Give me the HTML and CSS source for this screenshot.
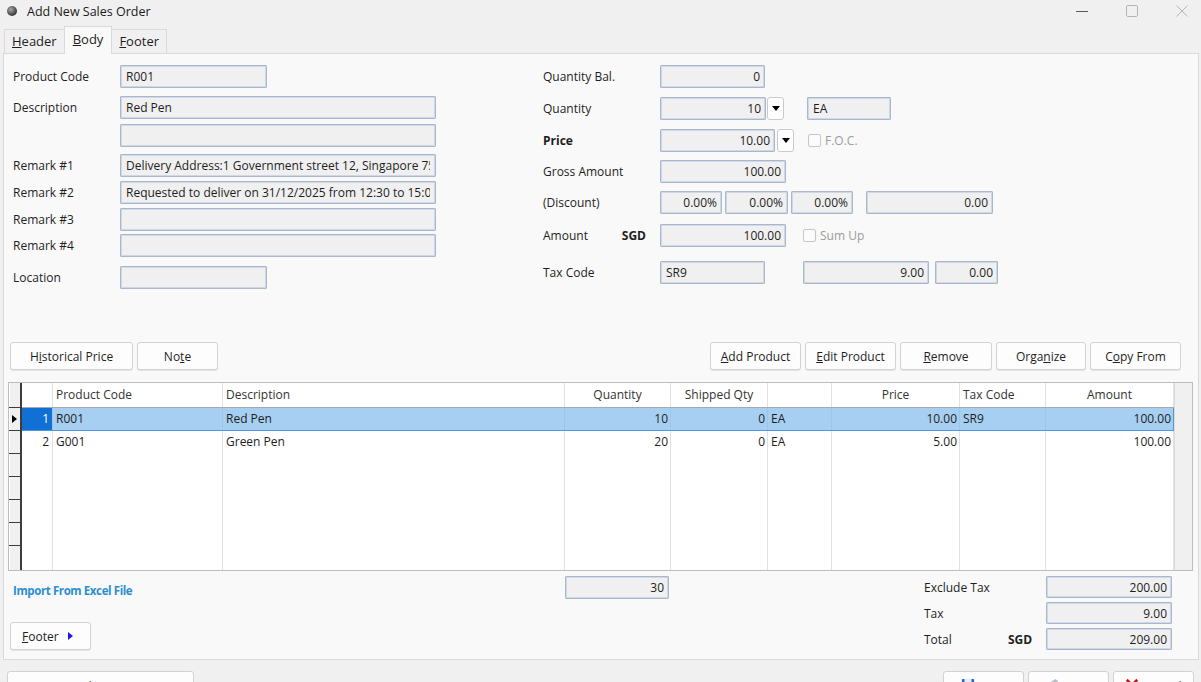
FILE: index.html
```html
<!DOCTYPE html>
<html>
<head>
	<meta http-equiv="Content-Type" content="text/html; charset=utf-8" />
	<title>Add New Sales Order</title>
	<link rel="stylesheet" href="styles.css">
</head>
<body>
<div class="titlebar">
	<span class="app_dot"></span>
	<span class="title">Add New Sales Order</span>
	<div class="win_buttons">
		<svg viewBox="0 0 12 12"><line x1="0" y1="6.5" x2="12" y2="6.5" stroke="#5a5a5a" stroke-width="1"/></svg>
		<svg viewBox="0 0 12 12"><rect x="0.5" y="0.5" width="11" height="11" rx="1.5" fill="none" stroke="#b4b4b4" stroke-width="1"/></svg>
		<svg viewBox="0 0 12 12"><path d="M0.5 0.5 L11.5 11.5 M11.5 0.5 L0.5 11.5" stroke="#b4b4b4" stroke-width="1"/></svg>
	</div>
</div>
<div class="tabs">
	<div class="tab"><u>H</u>eader</div>
	<div class="tab active"><u>B</u>ody</div>
	<div class="tab"><u>F</u>ooter</div>
</div>
<div class="panel">
	<div class="entry">
		<div class="col_left">
			<label>Product Code</label>
			<input class="box w147" type="text" value="R001" readonly>
			<label>Description</label>
			<input class="box w316" type="text" value="Red Pen" readonly>
			<label></label>
			<input class="box w316" type="text" value="" readonly>
			<label>Remark #1</label>
			<input class="box w316" type="text" value="Delivery Address:1 Government street 12, Singapore 758888" readonly>
			<label>Remark #2</label>
			<input class="box w316" type="text" value="Requested to deliver on 31/12/2025 from 12:30 to 15:00" readonly>
			<label>Remark #3</label>
			<input class="box w316" type="text" value="" readonly>
			<label>Remark #4</label>
			<input class="box w316" type="text" value="" readonly>
			<label>Location</label>
			<input class="box w147" type="text" value="" readonly>
		</div>
		<div class="col_right">
			<label>Quantity Bal.</label>
			<div class="field">
				<input class="box num w105" type="text" value="0" readonly>
			</div>
			<label>Quantity</label>
			<div class="field">
				<input class="box num w106" type="text" value="10" readonly>
				<span class="drop ml1"></span>
				<input class="box w84 ml23" type="text" value="EA" readonly>
			</div>
			<label><b>Price</b></label>
			<div class="field">
				<input class="box num w115" type="text" value="10.00" readonly>
				<span class="drop ml2"></span>
				<span class="check ml14"></span><span class="check_text">F.O.C.</span>
			</div>
			<label>Gross Amount</label>
			<div class="field">
				<input class="box num w126" type="text" value="100.00" readonly>
			</div>
			<label>(Discount)</label>
			<div class="field">
				<input class="box num w62" type="text" value="0.00%" readonly>
				<input class="box num w63 ml3" type="text" value="0.00%" readonly>
				<input class="box num w62 ml3" type="text" value="0.00%" readonly>
				<input class="box num w127 ml13" type="text" value="0.00" readonly>
			</div>
			<label class="split">Amount <b>SGD</b></label>
			<div class="field">
				<input class="box num w126" type="text" value="100.00" readonly>
				<span class="check ml17"></span><span class="check_text">Sum Up</span>
			</div>
			<label>Tax Code</label>
			<div class="field">
				<input class="box w105" type="text" value="SR9" readonly>
				<input class="box num w126 ml38" type="text" value="9.00" readonly>
				<input class="box num w63 ml6" type="text" value="0.00" readonly>
			</div>
		</div>
	</div>

	<div class="toolbar">
		<div class="btn_group">
			<div class="btn w123">H<u>i</u>storical Price</div>
			<div class="btn w81">No<u>t</u>e</div>
		</div>
		<div class="btn_group">
			<div class="btn w91"><u>A</u>dd Product</div>
			<div class="btn w91"><u>E</u>dit Product</div>
			<div class="btn w92"><u>R</u>emove</div>
			<div class="btn w90">Orga<u>n</u>ize</div>
			<div class="btn w91">C<u>o</u>py From</div>
		</div>
	</div>

	<div class="grid">
		<table class="lines">
			<colgroup>
				<col style="width:11px">
				<col style="width:32px">
				<col style="width:170px">
				<col style="width:342px">
				<col style="width:106px">
				<col style="width:97px">
				<col style="width:64px">
				<col style="width:128px">
				<col style="width:86px">
				<col style="width:128px">
			</colgroup>
			<tr class="head">
				<th class="ind"></th><th></th><th class="l">Product Code</th><th class="l">Description</th><th>Quantity</th><th>Shipped Qty</th><th></th><th>Price</th><th class="l">Tax Code</th><th>Amount</th>
			</tr>
			<tr class="sel">
				<td class="ind"><span class="arrow"></span></td><td class="no">1</td><td>R001</td><td>Red Pen</td><td class="r">10</td><td class="r">0</td><td>EA</td><td class="r">10.00</td><td>SR9</td><td class="r">100.00</td>
			</tr>
			<tr>
				<td class="ind"></td><td class="no">2</td><td>G001</td><td>Green Pen</td><td class="r">20</td><td class="r">0</td><td>EA</td><td class="r">5.00</td><td></td><td class="r">100.00</td>
			</tr>
			<tr><td class="ind"></td><td></td><td></td><td></td><td></td><td></td><td></td><td></td><td></td><td></td></tr>
			<tr><td class="ind"></td><td></td><td></td><td></td><td></td><td></td><td></td><td></td><td></td><td></td></tr>
			<tr><td class="ind"></td><td></td><td></td><td></td><td></td><td></td><td></td><td></td><td></td><td></td></tr>
			<tr><td class="ind"></td><td></td><td></td><td></td><td></td><td></td><td></td><td></td><td></td><td></td></tr>
			<tr class="last"><td class="ind"></td><td></td><td></td><td></td><td></td><td></td><td></td><td></td><td></td><td></td></tr>
		</table>
		<div class="vscroll"></div>
	</div>

	<div class="summary">
		<div class="sum_left">
			<a class="import" href="#">Import From Excel File</a>
			<div class="btn w81 footer_btn"><u>F</u>ooter <span class="tri"></span></div>
		</div>
		<input class="box num w104 qty_total" type="text" value="30" readonly>
		<div class="totals">
			<span>Exclude Tax</span><span></span>
			<input class="box num w126" type="text" value="200.00" readonly>
			<span>Tax</span><span></span>
			<input class="box num w126" type="text" value="9.00" readonly>
			<span>Total</span><b>SGD</b>
			<input class="box num w126" type="text" value="209.00" readonly>
		</div>
	</div>
</div>

<div class="actions">
	<div class="btn act_wide">Save and Create New</div>
	<div class="btn_group">
		<div class="btn act">
			<svg viewBox="0 0 16 16"><rect x="1" y="1" width="14" height="14" rx="1" fill="#2f62c8"/><rect x="4" y="1" width="8" height="5" fill="#e8eef8"/><rect x="4" y="9" width="8" height="6" fill="#ffffff"/></svg>
			Save
		</div>
		<div class="btn act">
			<svg viewBox="0 0 16 16"><path d="M3 6 L11 1 L14 4 L6 9 Z" fill="#b9bec6"/><rect x="1" y="7" width="14" height="7" rx="1" fill="#8e949c"/></svg>
			Print
		</div>
		<div class="btn act">
			<svg viewBox="0 0 16 16"><path d="M2 2 L14 14 M14 2 L2 14" stroke="#c8171b" stroke-width="3"/></svg>
			Cancel
		</div>
	</div>
</div>
</body>
</html>
```

FILE: styles.css
```css
body{
	margin: 0;
	width: 1201px;
	height: 682px;
	overflow: hidden;
	background-color: #f0f0f0;
	font-family: "Open Sans", "Noto Sans", sans-serif;
	font-size: 12px;
	color: #1e1e1e;
}

/* window chrome */
.titlebar{
	height: 22px;
	display: flex;
	align-items: center;
	padding-left: 7px;
}
.app_dot{
	width: 10px;
	height: 10px;
	border-radius: 50%;
	background: radial-gradient(circle at 38% 35%, #a8a8a8, #3a3a3a 70%);
}
.title{
	margin-left: 10px;
	font-size: 12.5px;
	color: #1a1a1a;
}
.win_buttons{
	margin-left: auto;
	margin-right: 13px;
	display: flex;
	gap: 38px;
}
.win_buttons svg{
	display: block;
	width: 12px;
	height: 12px;
}

.tabs{
	height: 31px;
	display: flex;
	align-items: flex-end;
	padding-left: 4px;
	position: relative;
	z-index: 1;
}
.tab{
	height: 24px;
	box-sizing: border-box;
	padding: 0 7px;
	border: 1px solid #dadada;
	border-bottom: 0;
	background-color: #f0f0f0;
	font-size: 13px;
	line-height: 22px;
}
.tab + .tab{
	margin-left: -1px;
}
.tab.active{
	height: 28px;
	padding: 0 8px;
	margin-bottom: -1px;
	background-color: #f9f9f9;
	line-height: 24px;
}

.panel{
	margin: 0 2px 0 3px;
	height: 607px;
	box-sizing: border-box;
	border: 1px solid #dadada;
	background-color: #f9f9f9;
	display: flex;
	flex-direction: column;
}

/* inputs */
.box{
	display: block;
	height: 23px;
	box-sizing: border-box;
	margin: 0;
	padding: 0 5px;
	border: 1px solid #a9b8cc;
	box-shadow: inset 0 0 0 1px #cfd8e4;
	border-radius: 1px;
	background-color: #f0f0f0;
	font: inherit;
	color: #1e1e1e;
	outline: none;
}
.num{
	text-align: right;
	padding-right: 4px;
}
.w62{ width: 62px; }
.w63{ width: 63px; }
.w84{ width: 84px; }
.w104{ width: 104px; }
.w105{ width: 105px; }
.w106{ width: 106px; }
.w115{ width: 115px; }
.w126{ width: 126px; }
.w127{ width: 127px; }
.w147{ width: 147px; }
.w316{ width: 316px; }
.ml1{ margin-left: 1px; }
.ml2{ margin-left: 2px; }
.ml3{ margin-left: 3px; }
.ml6{ margin-left: 6px; }
.ml13{ margin-left: 13px; }
.ml14{ margin-left: 14px; }
.ml17{ margin-left: 17px; }
.ml23{ margin-left: 23px; }
.ml38{ margin-left: 38px; }

.drop{
	width: 17px;
	height: 23px;
	box-sizing: border-box;
	border: 1px solid #cacaca;
	border-radius: 3px;
	background-color: #fff;
	display: flex;
	align-items: center;
	justify-content: center;
}
.drop::after{
	content: "";
	border-left: 4px solid transparent;
	border-right: 4px solid transparent;
	border-top: 5px solid #000;
}
.check{
	width: 13px;
	height: 13px;
	box-sizing: border-box;
	border: 1px solid #c6c6c6;
	border-radius: 2px;
	background-color: #fbfbfb;
}
.check_text{
	margin-left: 4px;
	color: #9c9c9c;
}

/* entry form */
.entry{
	height: 288px;
	box-sizing: border-box;
	padding: 11px 0 0 9px;
	display: flex;
	flex-shrink: 0;
}
.entry label{
	line-height: 23px;
	white-space: nowrap;
}
.col_left{
	width: 423px;
	display: grid;
	grid-template-columns: 107px 1fr;
	grid-template-rows: 31px 28px 30px 27px 27px 26px 32px 23px;
	align-items: start;
}
.col_right{
	margin-left: 107px;
	display: grid;
	grid-template-columns: 117px auto;
	grid-template-rows: 32px 32px 31px 31px 33px 37px 23px;
	align-items: start;
}
.col_right .split{
	display: flex;
	justify-content: space-between;
	padding-right: 14px;
}
.field{
	display: flex;
	align-items: center;
	height: 23px;
}

/* buttons */
.toolbar{
	height: 28px;
	flex-shrink: 0;
	display: flex;
	justify-content: space-between;
	padding: 0 17px 0 6px;
}
.btn_group{
	display: flex;
	gap: 4px;
}
.btn{
	height: 28px;
	box-sizing: border-box;
	border: 1px solid #d2d2d2;
	border-radius: 3px;
	background-color: #fdfdfd;
	box-shadow: 0 1px 0 #e4e4e4;
	display: flex;
	align-items: center;
	justify-content: center;
	color: #1e1e1e;
	white-space: nowrap;
}
.w81{ width: 81px; }
.w90{ width: 90px; }
.w91{ width: 91px; }
.w92{ width: 92px; }
.w123{ width: 123px; }

/* lines grid */
.grid{
	height: 189px;
	flex-shrink: 0;
	box-sizing: border-box;
	margin: 12px 5px 0 4px;
	border: 1px solid #bdbdbd;
	background-color: #fff;
	display: flex;
	overflow: hidden;
}
.lines{
	width: 1164px;
	table-layout: fixed;
	border-collapse: collapse;
	flex-shrink: 0;
}
.lines th, .lines td{
	box-sizing: border-box;
	padding: 0 3px;
	border-right: 1px solid #e1e1e1;
	white-space: nowrap;
	overflow: hidden;
	font-weight: normal;
	text-align: left;
}
.lines th{
	height: 24px;
	text-align: center;
	color: #333;
	border-bottom: 1px solid #a9a9a9;
}
.lines th.l{
	text-align: left;
}
.lines td{
	height: 23px;
}
.lines tr.last td{
	height: 25px;
}
.lines td.r{
	text-align: right;
	padding-right: 2px;
}
.lines .ind{
	padding: 0;
	background-color: #f0f0f0;
	border-right: 2px solid #3c3c3c;
	border-bottom: 1px solid #3c3c3c;
	border-left: 1px solid #fff;
}
.lines td.no{
	text-align: right;
	padding-right: 3px;
}
.lines tr.sel td{
	background-color: #a6cff1;
	border-top: 1px solid #6c93bb;
	border-bottom: 1px solid #4d98e0;
	border-right-color: #9cc6ea;
}
.lines tr.sel td:last-child{
	border-right: 1px solid #4d98e0;
}
.lines tr.sel td.no{
	background-color: #1170d6;
	color: #fff;
}
.lines tr.sel td.ind{
	background-color: #f0f0f0;
	border-right: 2px solid #3c3c3c;
	border-bottom: 1px solid #3c3c3c;
	border-top: 1px solid #3c3c3c;
}
.arrow{
	display: block;
	width: 0;
	height: 0;
	margin-left: 2px;
	border-top: 4px solid transparent;
	border-bottom: 4px solid transparent;
	border-left: 5px solid #000;
}
.vscroll{
	flex: 1;
	background-color: #f0f0f0;
	border-left: 1px solid #dcdcdc;
}

/* totals */
.summary{
	flex: 1;
	display: flex;
}
.sum_left{
	width: 561px;
	box-sizing: border-box;
	padding-left: 6px;
	display: flex;
	flex-direction: column;
	align-items: flex-start;
}
.import{
	margin: 12px 0 0 3px;
	line-height: 16px;
	font-size: 11.5px;
	letter-spacing: -0.4px;
	font-weight: bold;
	color: #2a8ed3;
	text-decoration: none;
}
.footer_btn{
	margin-top: 23px;
	justify-content: flex-start;
	padding-left: 11px;
}
.tri{
	margin-left: 9px;
	border-top: 4px solid transparent;
	border-bottom: 4px solid transparent;
	border-left: 5px solid #1a1ae6;
}
.qty_total{
	margin-top: 5px;
}
.totals{
	margin: 5px 0 0 255px;
	display: grid;
	grid-template-columns: 84px 38px 126px;
	grid-auto-rows: 22px;
	row-gap: 4px;
	align-items: center;
}
.totals .box{
	height: 22px;
}

/* bottom actions */
.actions{
	margin-top: 11px;
	padding: 0 7px;
	display: flex;
	justify-content: space-between;
}
.actions .btn{
	height: 30px;
	align-items: flex-start;
	padding-top: 6px;
	color: #444;
}
.act_wide{
	width: 187px;
}
.act{
	width: 81px;
	gap: 5px;
}
.act svg{
	width: 14px;
	height: 14px;
}
```
